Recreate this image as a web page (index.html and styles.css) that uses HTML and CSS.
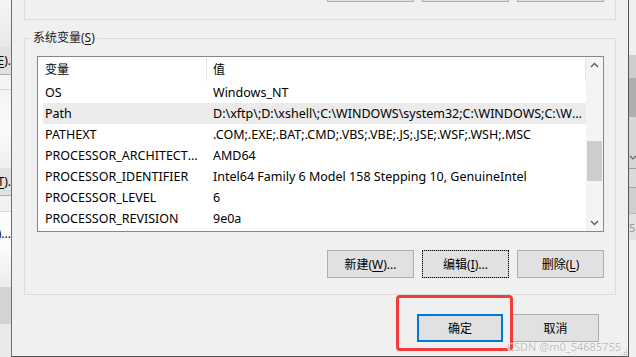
FILE: index.html
```html
<!DOCTYPE html>
<html>
<head>
<meta charset="utf-8">
<title>环境变量</title>
<link rel="stylesheet" href="styles.css">
</head>
<body>
<div class="screen">

  <!-- window behind, left edge -->
  <div class="side-left">
    <div class="sl sl-top"></div>
    <div class="sl sl-btn">(<u>E</u>).</div>
    <div class="sl sl-gap"></div>
    <div class="sl sl-light"></div>
    <div class="sl sl-btn">(<u>T</u>).</div>
    <div class="sl sl-gap2"></div>
    <div class="sl sl-white">(D)...</div>
    <div class="sl sl-soft"></div>
    <div class="sl sl-dark"></div>
    <div class="sl sl-end"></div>
  </div>

  <div class="dialog">
    <div class="user-box">
      <div class="stubs">
        <span class="stub"></span>
        <span class="stub"></span>
        <span class="stub"></span>
      </div>
    </div>

    <fieldset class="group">
      <legend>系统变量(<u>S</u>)</legend>

      <div class="listbox">
        <div class="list">
          <div class="row head"><span class="c1">变量</span><span class="c2">值</span></div>
          <div class="row"><span class="c1">OS</span><span class="c2">Windows_NT</span></div>
          <div class="row sel"><span class="c1">Path</span><span class="c2">D:\xftp\;D:\xshell\;C:\WINDOWS\system32;C:\WINDOWS;C:\WINDOWS\System32\Wbem;C:\WINDOWS\System32\WindowsPowerShell\v1.0\</span></div>
          <div class="row"><span class="c1">PATHEXT</span><span class="c2">.COM;.EXE;.BAT;.CMD;.VBS;.VBE;.JS;.JSE;.WSF;.WSH;.MSC</span></div>
          <div class="row"><span class="c1">PROCESSOR_ARCHITECTURE</span><span class="c2">AMD64</span></div>
          <div class="row"><span class="c1">PROCESSOR_IDENTIFIER</span><span class="c2">Intel64 Family 6 Model 158 Stepping 10, GenuineIntel</span></div>
          <div class="row"><span class="c1">PROCESSOR_LEVEL</span><span class="c2">6</span></div>
          <div class="row"><span class="c1">PROCESSOR_REVISION</span><span class="c2">9e0a</span></div>
        </div>
        <div class="scrollbar">
          <svg class="arrow" width="17" height="17" viewBox="0 0 17 17"><path d="M5 10 L8.5 6.5 L12 10" fill="none" stroke="#606060" stroke-width="1.4"/></svg>
          <div class="track">
            <div class="thumb"></div>
          </div>
          <svg class="arrow" width="17" height="17" viewBox="0 0 17 17"><path d="M5 7 L8.5 10.5 L12 7" fill="none" stroke="#606060" stroke-width="1.4"/></svg>
        </div>
      </div>

      <div class="btn-row">
        <button class="btn">新建(<u>W</u>)...</button>
        <button class="btn focus">编辑(<u>I</u>)...</button>
        <button class="btn">删除(<u>L</u>)</button>
      </div>
    </fieldset>

    <div class="footer">
      <button class="btn default">确定</button>
      <button class="btn">取消</button>
    </div>

    <div class="annot"></div>
    <div class="watermark">CSDN @m0_54685755</div>
    <svg class="grip" width="7" height="7" viewBox="0 0 7 7">
      <rect x="5" y="1" width="1" height="1" fill="#b0b0b0"/>
      <rect x="3" y="3" width="1" height="1" fill="#b0b0b0"/>
      <rect x="5" y="3" width="1" height="1" fill="#b0b0b0"/>
      <rect x="1" y="5" width="1" height="1" fill="#b0b0b0"/>
      <rect x="3" y="5" width="1" height="1" fill="#b0b0b0"/>
      <rect x="5" y="5" width="1" height="1" fill="#b0b0b0"/>
    </svg>
  </div>

  <!-- window behind, right edge -->
  <div class="side-right">
    <div class="sr sr-a"></div>
    <div class="sr sr-b"></div>
    <div class="sr sr-c"></div>
    <div class="sr sr-d"><svg width="7" height="6" viewBox="0 0 7 6"><path d="M1 1 L4 4 L7 1" fill="none" stroke="#606060" stroke-width="1.2"/></svg></div>
    <div class="sr sr-e"></div>
    <div class="sr sr-f"></div>
    <div class="sr sr-g">5</div>
    <div class="sr sr-h"></div>
  </div>

</div>
</body>
</html>
```

FILE: styles.css
```css
* { box-sizing:border-box; }
body { margin:0; background:#f0f0f0; color:#000; font-family:"Noto Sans", "Noto Sans CJK SC", sans-serif; font-size:12px; }
u { text-decoration-thickness:1px; text-underline-offset:2px; }

.screen { display:flex; width:636px; height:357px; overflow:hidden; }

/* left strip: other window */
.side-left { width:11px; flex:none; display:flex; flex-direction:column; overflow:hidden; background:#ececec; }
.sl { flex:none; white-space:nowrap; overflow:hidden; }
.sl-top { height:47px; background:linear-gradient(#f6f6f6, #e8e8e8); }
.sl-btn { height:28px; line-height:27px; background:#e1e1e1; border-bottom:1px solid #adadad; display:flex; justify-content:flex-end; }
.sl-gap { height:15px; background:#f4f4f4; border-bottom:1px solid #d9d9d9; }
.sl-light { height:78px; background:linear-gradient(#f4f4f4, #fbfbfb 50%, #efefef); }
.sl-gap2 { height:16px; background:#f2f2f2; border-bottom:1px solid #d9d9d9; }
.sl-white { height:38px; line-height:44px; background:#fcfcfc; display:flex; justify-content:flex-end; }
.sl-soft { height:37px; background:linear-gradient(#fafafa, #ececec); }
.sl-dark { height:37px; background:#d3d3d3; }
.sl-end { flex:1; background:#e9e9e9; }

/* right strip */
.side-right { width:7px; flex:none; display:flex; flex-direction:column; overflow:hidden; }
.sr { flex:none; }
.sr-a { height:55px; background:#f0f0f0; }
.sr-b { height:23px; background:#cdcdcd; }
.sr-c { height:39px; background:#aeaeae; }
.sr-d { height:51px; background:#d6d6d6; display:flex; align-items:flex-end; }
.sr-d svg { margin-bottom:7px; }
.sr-e { height:19px; background:#dadada; border-top:1px solid #a0a0a0; }
.sr-f { height:26px; background:#cfcfcf; border-top:1px solid #a8a8a8; }
.sr-g { height:27px; background:#e2e2e2; border-top:1px solid #b8b8b8; color:#999; font-size:11px; line-height:27px; }
.sr-h { flex:1; background:#f0f0f0; }

/* dialog */
.dialog { position:relative; width:618px; flex:none; background:#f0f0f0; border-left:1px solid #6e6e6e; border-right:1px solid #555; border-bottom:1px solid #555; height:357px; }

.user-box { margin:0 12px; height:20px; border:1px solid #dcdcdc; border-top:none; padding-right:11px; display:flex; justify-content:flex-end; }
.stubs { display:flex; gap:8px; }
.stub { width:87px; height:2px; background:#e1e1e1; border:1px solid #adadad; border-top:none; }

.group { margin:10px 12px 0 12px; padding:10px 11px 16px 12px; border:1px solid #dcdcdc; min-width:0; }
.group legend { padding:0 2px; margin-left:-6px; line-height:16px; color:#1a1a1a; }

.listbox { display:flex; height:176px; border:1px solid #828790; background:#fff; font-size:12.5px; }
.list { flex:1; min-width:0; overflow:hidden; padding-left:5px; }
.row { display:flex; height:21px; line-height:21px; white-space:nowrap; }
.row .c1 { width:164px; flex:none; padding:0 6px 0 2px; overflow:hidden; text-overflow:ellipsis; }
.row .c2 { flex:1; min-width:0; padding:0 4px 0 6px; overflow:hidden; text-overflow:ellipsis; }
.row.head { height:25px; line-height:23px; font-size:12px; }
.row.head .c1, .row.head .c2 { border-right:1px solid #e5e5e5; height:23px; margin-top:1px; }
.row.sel { background:#ebebeb; }

.scrollbar { width:17px; flex:none; display:flex; flex-direction:column; background:#f4f4f4; }
.arrow { display:block; flex:none; }
.track { flex:1; padding-top:67px; }
.thumb { margin-left:1px; width:15px; height:40px; background:#cdcdcd; }

.btn-row { display:flex; justify-content:flex-end; gap:8px; margin-top:18px; }
.btn { width:87px; height:28px; margin:0; padding:0; background:#e1e1e1; border:1px solid #adadad; font:inherit; color:#000; }
.btn.focus { outline:1px dotted #000; outline-offset:-1px; }

.footer { display:flex; justify-content:flex-end; gap:9px; margin-top:19px; padding-right:29px; }
.btn.default { width:86px; border:2px solid #0078d7; }

/* screenshot annotations */
.annot { position:absolute; left:384px; top:295px; width:117px; height:56px; border:3px solid #f23b3b; border-radius:4px; }
.watermark { position:absolute; right:7px; bottom:3px; font-size:11px; line-height:13px; color:#bdbdbd; text-shadow:0 0 1px #fff, 0 0 1px #fff; }
.grip { position:absolute; right:0; bottom:0; }
```
